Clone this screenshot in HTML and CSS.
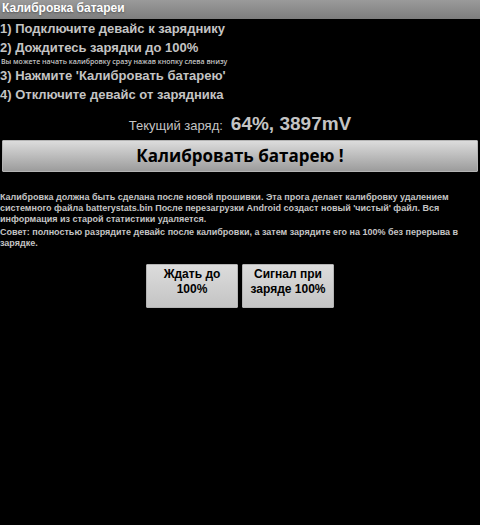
FILE: index.html
```html
<!DOCTYPE html>
<html lang="ru">
<head>
    <meta charset="UTF-8">
    <meta name="viewport" content="width=device-width, initial-scale=1.0">
    <title>Калибровка батареи</title>
    <link rel="stylesheet" href="styles.css">
</head>
<body>
    <header class="title-bar">
        <h1>Калибровка батареи</h1>
    </header>
    <main>
        <div class="steps">
            <p class="step">1) Подключите девайс к заряднику</p>
            <p class="step">2) Дождитесь зарядки до 100%</p>
            <p class="hint">Вы можете начать калибровку сразу нажав кнопку слева внизу</p>
            <p class="step">3) Нажмите 'Калибровать батарею'</p>
            <p class="step">4) Отключите девайс от зарядника</p>
        </div>
        <p class="charge">
            <span class="charge-label">Текущий заряд:</span>
            <span class="charge-value">64%, 3897mV</span>
        </p>
        <button class="calibrate" type="button">Калибровать батарею !</button>
        <div class="info">
            <p>Калибровка должна быть сделана после новой прошивки. Эта прога делает калибровку удалением системного файла batterystats.bin После перезагрузки Android создаст новый 'чистый' файл. Вся информация из старой статистики удаляется.</p>
            <p>Совет: полностью разрядите девайс после калибровки, а затем зарядите его на 100% без перерыва в зарядке.</p>
        </div>
        <div class="actions">
            <button type="button">Ждать до 100%</button>
            <button type="button">Сигнал при заряде 100%</button>
        </div>
    </main>
</body>
</html>
```
FILE: styles.css
```css
body {
    margin: 0;
    background-color: #000;
    color: #c4c4c4;
    font-family: "Liberation Sans", Arial, sans-serif;
}

h1,
p {
    margin: 0;
}

.title-bar {
    padding: 0 2px;
    background: linear-gradient(#9a9a9a, #7e7e7e);
}

.title-bar h1 {
    font-size: 12px;
    line-height: 17px;
    padding-bottom: 2px;
    font-weight: 700;
    color: #fff;
    text-shadow: 0 1px 2px #555;
}

.step {
    font-size: 13px;
    line-height: 19px;
    font-weight: 700;
}

.hint {
    font-family: "Open Sans", "Noto Sans", sans-serif;
    font-size: 7px;
    line-height: 9px;
    font-weight: 600;
    padding-left: 1px;
}

.charge {
    display: flex;
    justify-content: center;
    align-items: baseline;
    gap: 8px;
    margin-top: 8px;
    line-height: 24px;
}

.charge-label {
    font-size: 13px;
}

.charge-value {
    font-size: 19px;
    font-weight: 700;
}

button {
    border: 1px solid #b4b4b4;
    border-radius: 1px;
    padding: 0;
    color: #000;
    font-family: inherit;
    font-weight: 700;
    cursor: pointer;
}

.calibrate {
    display: block;
    width: calc(100% - 4px);
    margin: 2px 2px 0;
    height: 32px;
    background: linear-gradient(#dcdcdc, #9c9c9c);
    font-family: "Open Sans", "Noto Sans", sans-serif;
    font-size: 17px;
    line-height: 28px;
}

.info {
    margin-top: 20px;
    padding-right: 20px;
    font-size: 9px;
    line-height: 11px;
    font-weight: 700;
}

.info p + p {
    margin-top: 2px;
}

.actions {
    display: flex;
    justify-content: center;
    gap: 4px;
    margin-top: 15px;
}

.actions button {
    width: 92px;
    min-height: 44px;
    padding: 0 4px 8px;
    background: linear-gradient(#dcdcdc, #c4c4c4);
    font-size: 12px;
    line-height: 15px;
    font-weight: 700;
}
```
